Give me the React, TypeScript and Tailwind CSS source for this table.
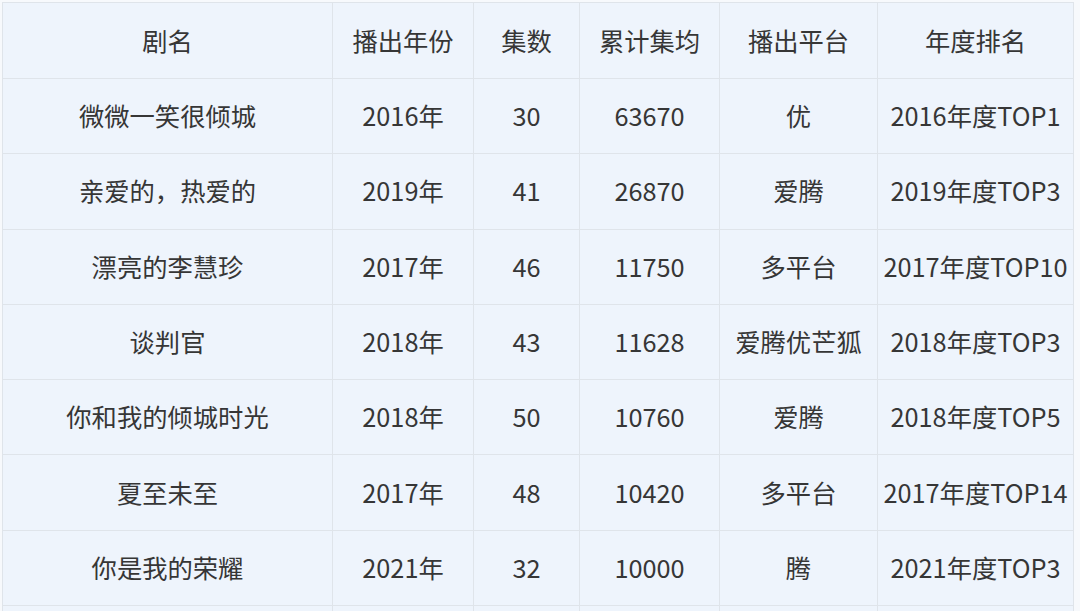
const headers = ["剧名", "播出年份", "集数", "累计集均", "播出平台", "年度排名"];

const rows = [
  ["微微一笑很倾城", "2016年", "30", "63670", "优", "2016年度TOP1"],
  ["亲爱的，热爱的", "2019年", "41", "26870", "爱腾", "2019年度TOP3"],
  ["漂亮的李慧珍", "2017年", "46", "11750", "多平台", "2017年度TOP10"],
  ["谈判官", "2018年", "43", "11628", "爱腾优芒狐", "2018年度TOP3"],
  ["你和我的倾城时光", "2018年", "50", "10760", "爱腾", "2018年度TOP5"],
  ["夏至未至", "2017年", "48", "10420", "多平台", "2017年度TOP14"],
  ["你是我的荣耀", "2021年", "32", "10000", "腾", "2021年度TOP3"],
];

const widths = ["w-[330px]", "w-[141px]", "w-[106px]", "w-[140px]", "w-[158px]", "w-[196px]"];

export default function App() {
  return (
    <div
      className="w-[1080px] h-[611px] overflow-hidden bg-[#f7f9fc] pt-[2px] pl-[2px]"
      style={{ fontFamily: '"Noto Sans CJK SC", "Noto Sans", sans-serif' }}
    >
      <table className="table-fixed border-collapse bg-[#eef4fc] text-[25.3px] text-[#363636]">
        <thead>
          <tr className="h-[76px]">
            {headers.map((h, i) => (
              <th key={h} className={`${widths[i]} border border-[#dfe4ea] font-normal text-center`}>
                {h}
              </th>
            ))}
          </tr>
        </thead>
        <tbody>
          {rows.map((r) => (
            <tr key={r[0]} className="h-[75.3px]">
              {r.map((c, i) => (
                <td key={i} className="border border-[#dfe4ea] text-center whitespace-nowrap">
                  {c}
                </td>
              ))}
            </tr>
          ))}
          <tr className="h-[40px]">
            {headers.map((h) => (
              <td key={h} className="border border-[#dfe4ea]"></td>
            ))}
          </tr>
        </tbody>
      </table>
    </div>
  );
}
